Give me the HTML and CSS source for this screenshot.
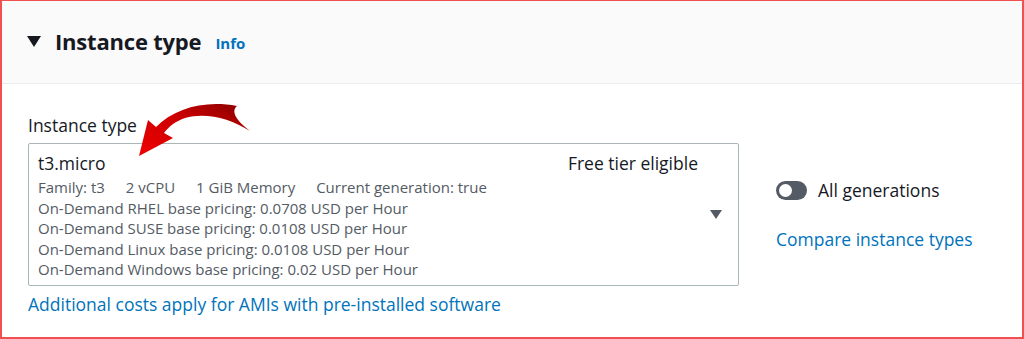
FILE: index.html
```html
<!DOCTYPE html>
<html lang="en">
<head>
  <meta charset="UTF-8" />
  <title>Instance type</title>
  <link rel="stylesheet" href="styles.css">
</head>
<body>
  <div class="frame">

    <!-- Section header -->
    <div class="section-head">
      <span class="caret"></span>
      <h2>Instance type</h2>
      <a class="info" href="#">Info</a>
    </div>

    <!-- Section body -->
    <div class="section-body">
      <div class="field">
        <label class="field-label">Instance type</label>
        <div class="select">
          <div class="select-main">
            <div class="select-top">
              <span class="select-value">t3.micro</span>
              <span class="select-tag">Free tier eligible</span>
            </div>
            <div class="select-meta">
              <span>Family: t3</span>
              <span>2 vCPU</span>
              <span>1 GiB Memory</span>
              <span>Current generation: true</span>
            </div>
            <div class="select-line">On-Demand RHEL base pricing: 0.0708 USD per Hour</div>
            <div class="select-line">On-Demand SUSE base pricing: 0.0108 USD per Hour</div>
            <div class="select-line">On-Demand Linux base pricing: 0.0108 USD per Hour</div>
            <div class="select-line">On-Demand Windows base pricing: 0.02 USD per Hour</div>
          </div>
          <span class="select-caret"></span>
        </div>
        <a class="link extra" href="#">Additional costs apply for AMIs with pre-installed software</a>

        <!-- annotation arrow -->
        <svg class="arrow" width="130" height="70" viewBox="0 0 130 70">
          <defs>
            <linearGradient id="arrowGrad" x1="0" y1="1" x2="1" y2="0">
              <stop offset="0" stop-color="#ee0000"/>
              <stop offset="0.55" stop-color="#cc0000"/>
              <stop offset="1" stop-color="#850000"/>
            </linearGradient>
          </defs>
          <path d="M9 61 L18 25 L26 32 C45 13 75 5 107 11 C102 15 103 23 120 36 C100 23 75 17 55 23 C46 26 39 31 34 38 L43 43 Z" fill="url(#arrowGrad)"/>
        </svg>
      </div>

      <div class="side">
        <div class="toggle-row">
          <span class="toggle"><span class="knob"></span></span>
          <span>All generations</span>
        </div>
        <a class="link" href="#">Compare instance types</a>
      </div>
    </div>

  </div>
</body>
</html>
```

FILE: styles.css
```css
* {
  box-sizing: border-box;
}

body {
  margin: 0;
  font-family: 'Open Sans', 'Noto Sans', sans-serif;
  color: #16191f;
  background: #fff;
}

.frame {
  width: 1024px;
  height: 339px;
  border: 1px solid #f05050;
  border-left-width: 2px;
  border-right-width: 2px;
  border-bottom-width: 2px;
  overflow: hidden;
}

.section-head {
  height: 83px;
  background: #fafafa;
  border-bottom: 1px solid #eaeded;
  display: flex;
  align-items: center;
  padding-left: 25px;
  padding-bottom: 2px;
}

.caret {
  width: 0;
  height: 0;
  border-left: 7px solid transparent;
  border-right: 7px solid transparent;
  border-top: 11px solid #16191f;
  margin-right: 14px;
  margin-top: 1px;
}

.section-head h2 {
  margin: 0;
  font-size: 22px;
  font-weight: 700;
  letter-spacing: -0.2px;
}

.info {
  margin-left: 14px;
  margin-top: 4px;
  font-size: 15px;
  font-weight: 700;
  color: #0073bb;
  text-decoration: none;
}

.section-body {
  display: flex;
  padding: 30px 0 0 26px;
}

.field {
  position: relative;
  width: 711px;
}

.field-label {
  display: block;
  font-size: 17.5px;
  line-height: 22px;
  margin-bottom: 7px;
}

.select {
  height: 143px;
  border: 1px solid #aab7b8;
  border-radius: 2px;
  display: flex;
  align-items: flex-start;
  padding: 8px 16px 0 9px;
}

.select-main {
  flex: 1;
}

.select-top {
  display: flex;
  justify-content: space-between;
  font-size: 17.5px;
  line-height: 22px;
  margin-bottom: 3px;
  padding-right: 12px;
}

.select-meta,
.select-line {
  font-size: 15px;
  line-height: 20.5px;
  color: #545b64;
}

.select-meta span {
  margin-right: 17px;
}

.select-caret {
  width: 0;
  height: 0;
  border-left: 6px solid transparent;
  border-right: 6px solid transparent;
  border-top: 9px solid #545b64;
  margin-top: 58px;
}

.link {
  color: #0073bb;
  text-decoration: none;
  font-size: 17.5px;
  line-height: 22px;
}

.extra {
  display: block;
  margin-top: 7px;
}

.arrow {
  position: absolute;
  left: 102px;
  top: -19px;
}

.side {
  padding: 65px 0 0 37px;
  display: flex;
  flex-direction: column;
  gap: 27px;
}

.toggle-row {
  display: flex;
  align-items: center;
  gap: 11px;
  font-size: 17.5px;
  line-height: 22px;
}

.toggle {
  width: 31px;
  height: 19px;
  border-radius: 10px;
  background: #545b64;
  display: flex;
  align-items: center;
  padding-left: 3px;
}

.knob {
  width: 13px;
  height: 13px;
  border-radius: 50%;
  background: #fff;
}
```
